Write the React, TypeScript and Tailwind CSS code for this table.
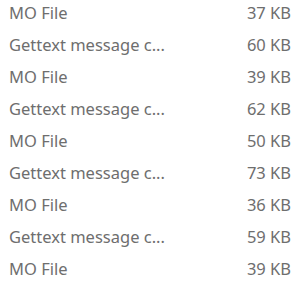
import React from 'react';

const files = [
  { type: 'MO File', size: '37 KB' },
  { type: 'Gettext message c...', size: '60 KB' },
  { type: 'MO File', size: '39 KB' },
  { type: 'Gettext message c...', size: '62 KB' },
  { type: 'MO File', size: '50 KB' },
  { type: 'Gettext message c...', size: '73 KB' },
  { type: 'MO File', size: '36 KB' },
  { type: 'Gettext message c...', size: '59 KB' },
  { type: 'MO File', size: '39 KB' },
];

const App: React.FC = () => {
  return (
    <div className="w-[300px] h-[284px] bg-white overflow-hidden font-['Noto_Sans',sans-serif] text-[16.5px] text-[#6e6e6e]">
      <ul>
        {files.map((f, i) => (
          <li key={i} className="flex items-center h-[32px] pb-[5px] pl-[9px] pr-[9px]">
            <span className="flex-1">{f.type}</span>
            <span>{f.size}</span>
          </li>
        ))}
      </ul>
    </div>
  );
};

export default App;
